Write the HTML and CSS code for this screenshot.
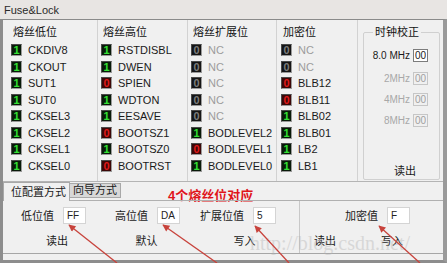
FILE: index.html
```html
<!DOCTYPE html>
<html lang="zh">
<head>
  <meta charset="UTF-8" />
  <title>Fuse&amp;Lock</title>
  <link rel="stylesheet" href="styles.css">
</head>
<body>
  <div class="window">
    <div class="titlebar">Fuse&amp;Lock</div>
    <div class="client">
      <!-- fuse bits -->
      <div class="fuses">
        <div class="col col-low">
          <h2>熔丝低位</h2>
          <div class="bit"><span class="led on">1</span>CKDIV8</div>
          <div class="bit"><span class="led on">1</span>CKOUT</div>
          <div class="bit"><span class="led on">1</span>SUT1</div>
          <div class="bit"><span class="led on">1</span>SUT0</div>
          <div class="bit"><span class="led on">1</span>CKSEL3</div>
          <div class="bit"><span class="led on">1</span>CKSEL2</div>
          <div class="bit"><span class="led on">1</span>CKSEL1</div>
          <div class="bit"><span class="led on">1</span>CKSEL0</div>
        </div>
        <div class="col col-high">
          <h2>熔丝高位</h2>
          <div class="bit"><span class="led on">1</span>RSTDISBL</div>
          <div class="bit"><span class="led on">1</span>DWEN</div>
          <div class="bit"><span class="led off">0</span>SPIEN</div>
          <div class="bit"><span class="led on">1</span>WDTON</div>
          <div class="bit"><span class="led on">1</span>EESAVE</div>
          <div class="bit"><span class="led off">0</span>BOOTSZ1</div>
          <div class="bit"><span class="led on">1</span>BOOTSZ0</div>
          <div class="bit"><span class="led off">0</span>BOOTRST</div>
        </div>
        <div class="col col-ext">
          <h2>熔丝扩展位</h2>
          <div class="bit nc"><span class="led">0</span>NC</div>
          <div class="bit nc"><span class="led">0</span>NC</div>
          <div class="bit nc"><span class="led">0</span>NC</div>
          <div class="bit nc"><span class="led">0</span>NC</div>
          <div class="bit nc"><span class="led">0</span>NC</div>
          <div class="bit"><span class="led on">1</span>BODLEVEL2</div>
          <div class="bit"><span class="led off">0</span>BODLEVEL1</div>
          <div class="bit"><span class="led on">1</span>BODLEVEL0</div>
        </div>
        <div class="col col-lock">
          <h2>加密位</h2>
          <div class="bit nc"><span class="led">0</span>NC</div>
          <div class="bit nc"><span class="led">0</span>NC</div>
          <div class="bit"><span class="led off">0</span>BLB12</div>
          <div class="bit"><span class="led off">0</span>BLB11</div>
          <div class="bit"><span class="led on">1</span>BLB02</div>
          <div class="bit"><span class="led on">1</span>BLB01</div>
          <div class="bit"><span class="led on">1</span>LB2</div>
          <div class="bit"><span class="led on">1</span>LB1</div>
        </div>
        <fieldset class="clock">
          <legend>时钟校正</legend>
          <div class="freq"><label>8.0 MHz</label><input value="00"></div>
          <div class="freq disabled"><label>2MHz</label><input value="00" disabled></div>
          <div class="freq disabled"><label>4MHz</label><input value="00" disabled></div>
          <div class="freq disabled"><label>8MHz</label><input value="00" disabled></div>
          <button>读出</button>
        </fieldset>
      </div>

      <!-- tabs -->
      <div class="tabs">
        <span class="tab active">位配置方式</span>
        <span class="tab">向导方式</span>
        <span class="note">4个熔丝位对应</span>
      </div>
      <div class="page">
        <div class="group fuse-group">
          <div class="field"><label>低位值</label><input value="FF"></div>
          <div class="field"><label>高位值</label><input value="DA"></div>
          <div class="field"><label>扩展位值</label><input value="5"></div>
          <button>读出</button>
          <button>默认</button>
          <button>写入</button>
        </div>
        <div class="group lock-group">
          <div class="field"><label>加密值</label><input value="F"></div>
          <button>读出</button>
          <button>写入</button>
        </div>
      </div>
    </div>

    <!-- annotation layer -->
    <svg class="marks" viewBox="0 0 447 263">
      <defs>
        <marker id="tip" viewBox="0 0 10 10" refX="9" refY="5" markerUnits="userSpaceOnUse" markerWidth="10" markerHeight="7" orient="auto">
          <path d="M0 0L10 5L0 10z" fill="#c8433c"/>
        </marker>
      </defs>
      <text class="watermark" x="250" y="250">http://blog.csdn.net/</text>
      <line x1="117" y1="263" x2="69" y2="225" marker-end="url(#tip)"/>
      <line x1="217" y1="263" x2="163" y2="225" marker-end="url(#tip)"/>
      <line x1="289" y1="263" x2="255" y2="226" marker-end="url(#tip)"/>
      <line x1="420" y1="263" x2="379" y2="226" marker-end="url(#tip)"/>
    </svg>
  </div>
</body>
</html>
```

FILE: styles.css
```css
/* Reset & basic styling */
* {
  box-sizing: border-box;
  margin: 0;
  padding: 0;
}
body {
  width: 447px;
  height: 263px;
  overflow: hidden;
  font-family: "Liberation Sans", "Noto Sans CJK SC", sans-serif;
  font-size: 11px;
  color: #1a1a1a;
  background: #f0f0f0;
}
.window {
  position: relative;
  width: 447px;
  height: 263px;
  display: flex;
  flex-direction: column;
  background: #e8e5e3;
}
.titlebar {
  height: 19px;
  padding: 3px 0 0 4px;
  font-size: 11px;
  line-height: 14px;
  color: #2a2a2a;
}
.client {
  flex: 1;
  display: flex;
  flex-direction: column;
  background: #f0f0f0;
  border-top: 1px solid #8a8a8a;
  border-left: 3px solid #8d8d8d;
  border-right: 4px solid #9a9a9a;
  border-bottom: 3px solid #8d8d8d;
}

/* fuse columns */
.fuses {
  display: flex;
  height: 162px;
  border-bottom: 1px solid #b4b4b4;
}
.col {
  padding: 5px 0 0 3px;
  border-right: 1px solid #d2d2d2;
}
.col-low { width: 95px; padding-left: 8px; }
.col-high { width: 90px; }
.col-ext { width: 89px; }
.col-lock { width: 81px; padding-left: 4px; }
h2 {
  font-size: 11px;
  font-weight: normal;
  line-height: 14px;
  margin: 0 0 3px 2px;
  color: #111;
}
.bit {
  display: flex;
  align-items: center;
  gap: 6px;
  height: 16.5px;
  white-space: nowrap;
}
.bit.nc { color: #9c9c9c; }
.led {
  display: inline-block;
  width: 11px;
  height: 12px;
  border: 1px solid;
  border-color: #4a4a4a #9a9a9a #9a9a9a #4a4a4a;
  background: #151515;
  color: #7c7c7c;
  font: bold 11px/10px "Liberation Sans", sans-serif;
  text-align: center;
}
.led.on {
  background: #081a08;
  color: #34e034;
}
.led.off {
  background: #3c0606;
  color: #e01a1a;
}

/* clock calibration */
.clock {
  width: 77px;
  height: 155px;
  margin: 5px 0 0 5px;
  padding: 6px 11px 0 0;
  border: 1px solid #d0d0d0;
  border-radius: 2px;
}
.clock legend {
  margin-left: 9px;
  padding: 0 2px;
  line-height: 14px;
  color: #111;
}
.freq {
  display: flex;
  justify-content: flex-end;
  align-items: center;
  gap: 3px;
  height: 21px;
  font-size: 10px;
}
.freq:first-of-type { margin-bottom: 2px; }
.freq input {
  width: 15px;
  height: 13px;
  padding: 0 1px;
  border: 1px solid #7c7c7c;
  background: #fff;
  font: 10px "Liberation Sans", sans-serif;
  color: #222;
}
.freq.disabled { color: #a8a8a8; }
.freq.disabled input {
  border-color: #c6c6c6;
  background: #f0f0f0;
  color: #a0a0a0;
}
button {
  height: 18px;
  border: none;
  background: transparent;
  font: 11px "Liberation Sans", "Noto Sans CJK SC", sans-serif;
  color: #1a1a1a;
  cursor: pointer;
}
.clock button {
  display: block;
  width: 42px;
  margin: 30px 0 0 20px;
}

/* tab strip */
.tabs {
  display: flex;
  align-items: flex-end;
  height: 18px;
}
.tab {
  height: 15px;
  padding: 0 3px;
  line-height: 13px;
  border: 1px solid #a8a8a8;
  background: #d8d8d8;
  font-size: 11px;
}
.tab.active {
  position: relative;
  width: 67px;
  height: 19px;
  margin-bottom: -1px;
  padding: 2px 0 0 7px;
  line-height: 14px;
  border-bottom: none;
  background: #f0f0f0;
}
.tab:nth-child(2) {
  width: 51px;
  border-left: none;
  margin-bottom: 2px;
}
.note {
  margin: 0 0 -4px 47px;
  line-height: 16px;
  font-size: 13px;
  font-weight: bold;
  color: #e0151b;
}

/* tab page */
.page {
  display: flex;
  height: 54px;
  border-top: 1px solid #b0b0b0;
  border-bottom: 1px solid #a6a6a6;
}
.group {
  display: grid;
  grid-template-rows: 20px 20px;
  row-gap: 5px;
  padding-top: 4px;
}
.fuse-group {
  width: 297px;
  padding-left: 7px;
  grid-template-columns: 94px 85px 111px;
  border-right: 1px solid #c8c8c8;
}
.lock-group {
  grid-template-columns: 50px 84px;
}
.field {
  display: flex;
  align-items: center;
  gap: 9px;
  padding-left: 11px;
  white-space: nowrap;
}
.lock-group .field {
  grid-column: 1 / -1;
  padding-left: 45px;
}
.field input {
  width: 23px;
  height: 17px;
  padding-left: 3px;
  border: 1px solid #d4d4d4;
  background: #fff;
  font: 10px "Liberation Sans", sans-serif;
  color: #222;
}
.group button {
  height: 20px;
}

/* red annotation arrows + watermark */
.marks {
  position: absolute;
  top: 0;
  left: 0;
  width: 447px;
  height: 263px;
  pointer-events: none;
}
.marks line {
  stroke: #c8433c;
  stroke-width: 1.3;
}
.watermark {
  font: 20px "Liberation Serif", serif;
  fill: #b4b4b4;
  opacity: 0.4;
}
```
